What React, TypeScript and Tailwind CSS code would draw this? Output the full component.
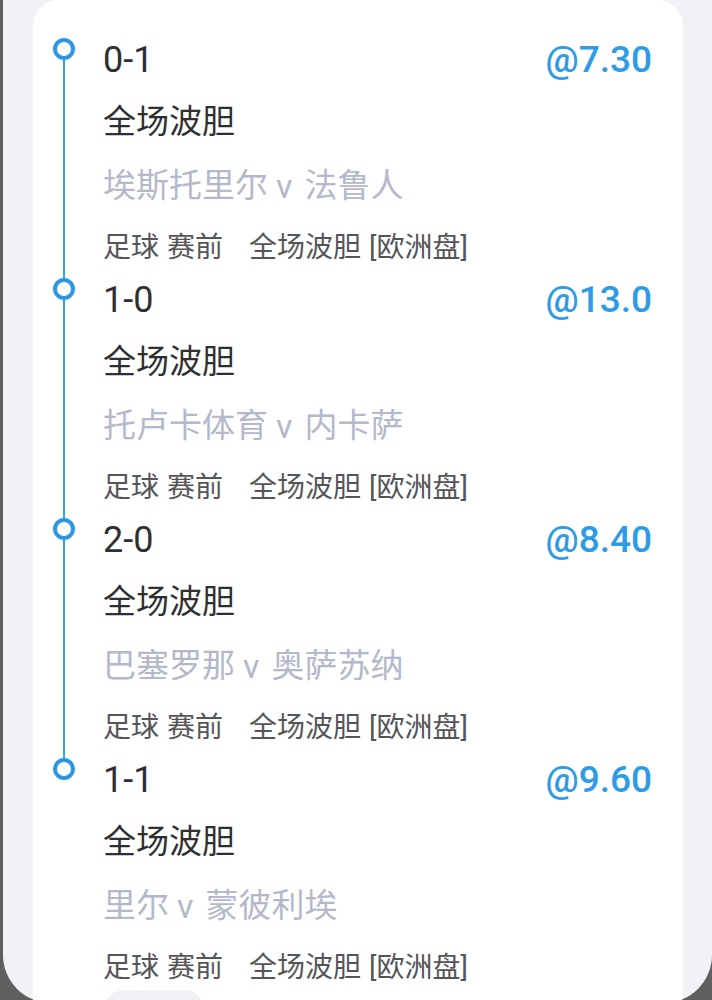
import React from "react";

const bets = [
  { score: "0-1", odds: "@7.30", match: ["埃斯托里尔", "法鲁人"] },
  { score: "1-0", odds: "@13.0", match: ["托卢卡体育", "内卡萨"] },
  { score: "2-0", odds: "@8.40", match: ["巴塞罗那", "奥萨苏纳"] },
  { score: "1-1", odds: "@9.60", match: ["里尔", "蒙彼利埃"] },
];

const font = { fontFamily: "Roboto, 'Noto Sans CJK SC', sans-serif" };

export default function App() {
  return (
    <div className="h-[1000px] overflow-hidden bg-[#5f5f5f]" style={font}>
      <div className="ml-[3px] h-[1003px] overflow-hidden rounded-b-[48px] bg-[#f1f1f6]">
        <div className="ml-[30px] mr-[29px] h-[1100px] rounded-t-[26px] bg-white pl-[20px] pr-[31px] pt-[38px]">
          {bets.map((b, i) => (
            <div key={i} className="flex h-[240px]">
              {/* timeline column */}
              <div className="flex w-[22px] flex-col items-center">
                <div className="h-[22px] w-[22px] shrink-0 rounded-full border-[4px] border-[#2b97e4] bg-white" />
                {i < bets.length - 1 && <div className="w-[2px] flex-1 bg-[#3f9bd9]" />}
              </div>

              <div className="ml-[28px] flex-1">
                <div className="-mt-[9px] flex items-center justify-between leading-[62px]">
                  <span className="text-[36px] text-[#2f2f33]">{b.score}</span>
                  <span className="text-[37px] font-medium text-[#2d9be6]">{b.odds}</span>
                </div>
                <div className="text-[33px] leading-[62px] text-[#2f2f33]">全场波胆</div>
                <div className="flex pt-[2px] text-[33px] leading-[62px] text-[#b5b8ca]">
                  <span>{b.match[0]}</span>
                  <span className="ml-[8px] mr-[12px] text-[34px]">v</span>
                  <span>{b.match[1]}</span>
                </div>
                <div className="flex text-[28px] leading-[62px] text-[#555558]">
                  <span>足球</span>
                  <span className="ml-[8px]">赛前</span>
                  <span className="ml-[26px]">全场波胆</span>
                  <span className="ml-[8px]">[欧洲盘]</span>
                </div>
              </div>
            </div>
          ))}
          <div className="ml-[51px] mt-[-8px] h-[40px] w-[100px] rounded-full bg-[#f0f0f5]" />
        </div>
      </div>
    </div>
  );
}
